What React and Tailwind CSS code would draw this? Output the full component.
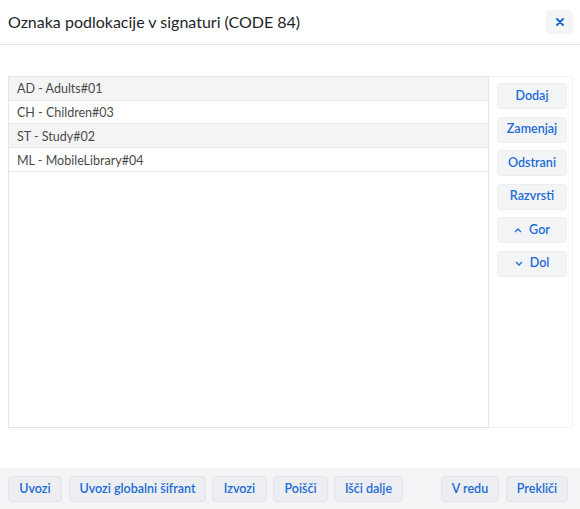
import React from "react";

const rows = [
  "AD - Adults#01",
  "CH - Children#03",
  "ST - Study#02",
  "ML - MobileLibrary#04",
];

const SideButton = ({ children }) => (
  <button className="h-[26px] w-[70px] rounded border border-[#eceef1] bg-[#f3f4f6] text-[12.5px] font-semibold text-[#1c6bd6] flex items-center justify-center gap-[7px] whitespace-nowrap">
    {children}
  </button>
);

const FootButton = ({ children, className = "" }) => (
  <button
    className={`h-[26px] rounded border border-[#e2e4e8] bg-[#eceef1] text-[12.5px] font-semibold text-[#1c6bd6] whitespace-nowrap flex items-center justify-center ${className}`}
  >
    {children}
  </button>
);

const App = () => {
  return (
    <div
      className="h-[509px] w-[580px] bg-white flex flex-col text-[#212529]"
      style={{ fontFamily: 'Lato, "Open Sans", sans-serif' }}
    >
      <div className="h-[45px] shrink-0 border-b border-[#e3e6ea] flex items-center justify-between pl-2 pr-[7px]">
        <h1 className="text-[16px] font-normal">Oznaka podlokacije v signaturi (CODE 84)</h1>
        <button className="h-[24px] w-[27px] rounded bg-[#f3f4f6] flex items-center justify-center">
          <svg width="8" height="8" viewBox="0 0 8 8">
            <path d="M1 1L7 7M7 1L1 7" stroke="#1c6bd6" strokeWidth="2" strokeLinecap="round" />
          </svg>
        </button>
      </div>

      <div className="flex-1 pt-[31px] pl-2 pr-[7px] pb-[40px] flex">
        <div className="flex-1 border border-[#e1e4e8] flex flex-col">
          {rows.map((r, i) => (
            <div
              key={r}
              className={`h-[23.7px] flex items-center pl-2 pt-[3px] text-[12.5px] text-[#4a4a4a] border-b border-[#e6e8eb] ${
                i % 2 === 0 ? "bg-[#f3f4f6]" : "bg-white"
              }`}
            >
              {r}
            </div>
          ))}
        </div>
        <div className="w-[84px] border-y border-r border-[#f1f2f4] pt-[6px] pl-2 flex flex-col gap-[7.5px]">
          <SideButton>Dodaj</SideButton>
          <SideButton>Zamenjaj</SideButton>
          <SideButton>Odstrani</SideButton>
          <SideButton>Razvrsti</SideButton>
          <SideButton>
            <svg width="8" height="6" viewBox="0 0 8 6">
              <path d="M1 5L4 2L7 5" fill="none" stroke="#1c6bd6" strokeWidth="1.3" />
            </svg>
            Gor
          </SideButton>
          <SideButton>
            <svg width="8" height="6" viewBox="0 0 8 6">
              <path d="M1 1L4 4L7 1" fill="none" stroke="#1c6bd6" strokeWidth="1.3" />
            </svg>
            Dol
          </SideButton>
        </div>
      </div>

      <div className="h-[41px] shrink-0 bg-[#f3f4f6] flex items-start pt-2 pl-2 pr-3">
        <div className="flex gap-[6px]">
          <FootButton className="w-[54px] mr-[1px]">Uvozi</FootButton>
          <FootButton className="w-[137px]">Uvozi globalni šifrant</FootButton>
          <FootButton className="w-[55px]">Izvozi</FootButton>
          <FootButton className="w-[55px]">Poišči</FootButton>
          <FootButton className="w-[69px]">Išči dalje</FootButton>
        </div>
        <div className="ml-auto flex gap-[7px]">
          <FootButton className="w-[58px]">V redu</FootButton>
          <FootButton className="w-[62px]">Prekliči</FootButton>
        </div>
      </div>
    </div>
  );
};

export default App;
